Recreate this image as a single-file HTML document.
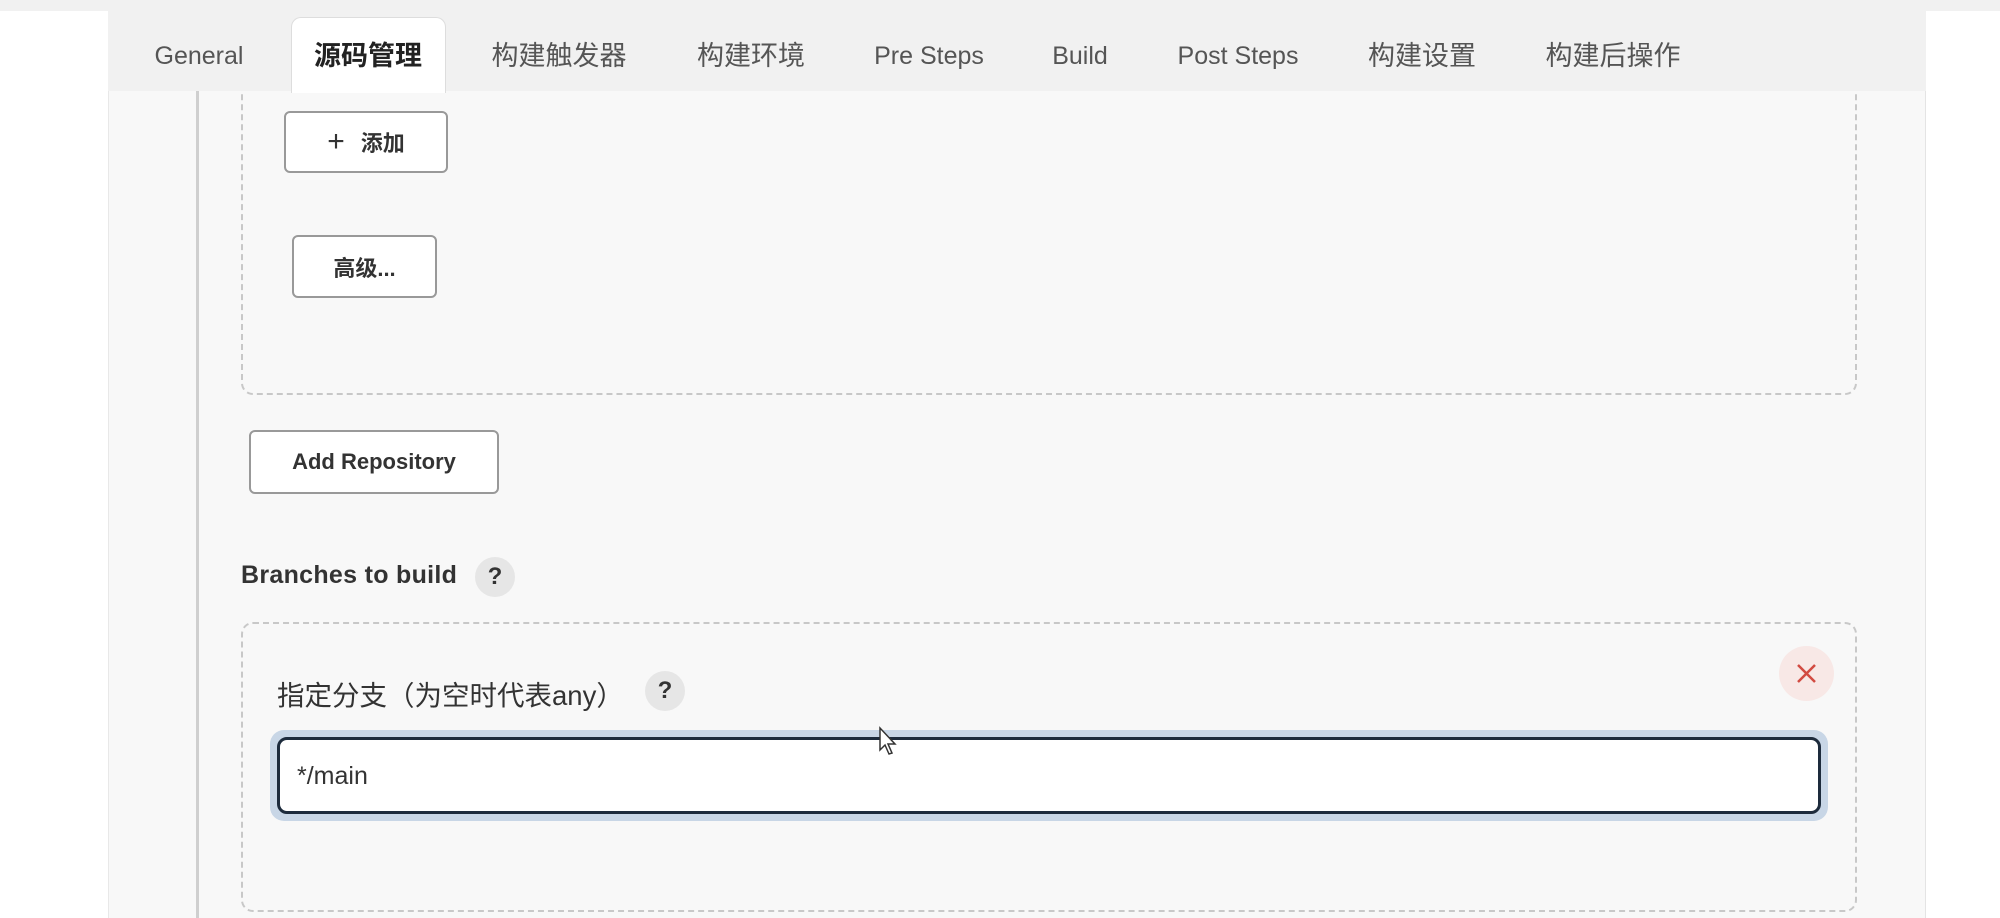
<!DOCTYPE html>
<html><head><meta charset="utf-8"><style>
*{box-sizing:border-box;margin:0;padding:0}
body{width:2000px;height:918px;overflow:hidden;background:#fff;font-family:"Liberation Sans","Noto Sans CJK SC",sans-serif;position:relative;color:#333}
.topstrip{position:absolute;left:0;top:0;width:2000px;height:11px;background:#f1f1f1}
.panel{position:absolute;left:108px;top:11px;width:1818px;height:907px;background:#f8f8f8;border-left:1px solid #e8e8e8;border-right:1px solid #e4e4e4}
.tabbar{position:absolute;left:108px;top:11px;width:1818px;height:80px;background:#f1f1f1;z-index:2}
.tab{position:absolute;top:0;height:91px;line-height:112px;font-size:25px;color:#555;transform:translateX(-50%);white-space:nowrap;z-index:4}
.tab .c{font-size:27px}
.active{position:absolute;left:291px;top:17px;width:155px;height:76px;background:#fff;border:1px solid #ddd;border-bottom:none;border-radius:10px 10px 0 0;z-index:3}
.vline{position:absolute;left:196px;top:91px;width:3px;height:827px;background:#cfcfcf}
.dbox{position:absolute;border:2px dashed #c8c8c8;border-radius:12px}
.btn{position:absolute;background:#fff;border:2px solid #999;border-radius:6px;font-weight:bold;font-size:22px;color:#333;display:flex;align-items:center;justify-content:center}
.q{position:absolute;width:40px;height:40px;border-radius:50%;background:#e6e6e6;font-weight:bold;font-size:24px;color:#333;display:flex;align-items:center;justify-content:center}
</style></head><body>
<div class="topstrip"></div>
<div class="panel"></div>
<div class="dbox" style="left:241px;top:60px;width:1616px;height:335px;border-top:none;border-top-left-radius:0;border-top-right-radius:0"></div>
<div class="tabbar"></div>
<div class="active"></div>
<div class="tab" style="left:199px">General</div>
<div class="tab" style="left:368px;color:#222;font-weight:bold"><span class="c">源码管理</span></div>
<div class="tab" style="left:559px"><span class="c">构建触发器</span></div>
<div class="tab" style="left:751px"><span class="c">构建环境</span></div>
<div class="tab" style="left:929px">Pre Steps</div>
<div class="tab" style="left:1080px">Build</div>
<div class="tab" style="left:1238px">Post Steps</div>
<div class="tab" style="left:1422px"><span class="c">构建设置</span></div>
<div class="tab" style="left:1613px"><span class="c">构建后操作</span></div>
<div class="vline"></div>
<div class="btn" style="left:284px;top:111px;width:164px;height:62px"><span style="font-weight:normal;font-size:30px;margin-right:16px">+</span>添加</div>
<div class="btn" style="left:292px;top:235px;width:145px;height:63px">高级...</div>
<div class="btn" style="left:249px;top:430px;width:250px;height:64px">Add Repository</div>
<div style="position:absolute;left:241px;top:561px;font-size:25px;font-weight:bold;color:#333;letter-spacing:0.3px">Branches to build</div>
<div class="q" style="left:475px;top:557px">?</div>
<div class="dbox" style="left:241px;top:622px;width:1616px;height:290px"></div>
<div style="position:absolute;left:277px;top:673px;font-size:27.5px;color:#333">指定分支（为空时代表any）</div>
<div class="q" style="left:645px;top:671px">?</div>
<div style="position:absolute;left:1779px;top:646px;width:55px;height:55px;border-radius:50%;background:#f8e8e6"></div>
<svg style="position:absolute;left:1795px;top:662px" width="23" height="23" viewBox="0 0 23 23"><path d="M3 3L20 20M20 3L3 20" stroke="#d24b42" stroke-width="2.5"/></svg>
<div style="position:absolute;left:270px;top:730px;width:1558px;height:91px;border-radius:14px;background:#c8d6e6"></div>
<div style="position:absolute;left:277px;top:737px;width:1544px;height:77px;border-radius:10px;background:#fff;border:3px solid #1d2b3c"></div>
<div style="position:absolute;left:297px;top:762px;font-size:25px;color:#333">*/main</div>
<svg style="position:absolute;left:878px;top:726px" width="20" height="30" viewBox="0 0 20 30"><path d="M2 2L2 24L7 19L11 28L14 27L10 18L17 18Z" fill="#fff" stroke="#333" stroke-width="1.5"/></svg>
</body></html>
